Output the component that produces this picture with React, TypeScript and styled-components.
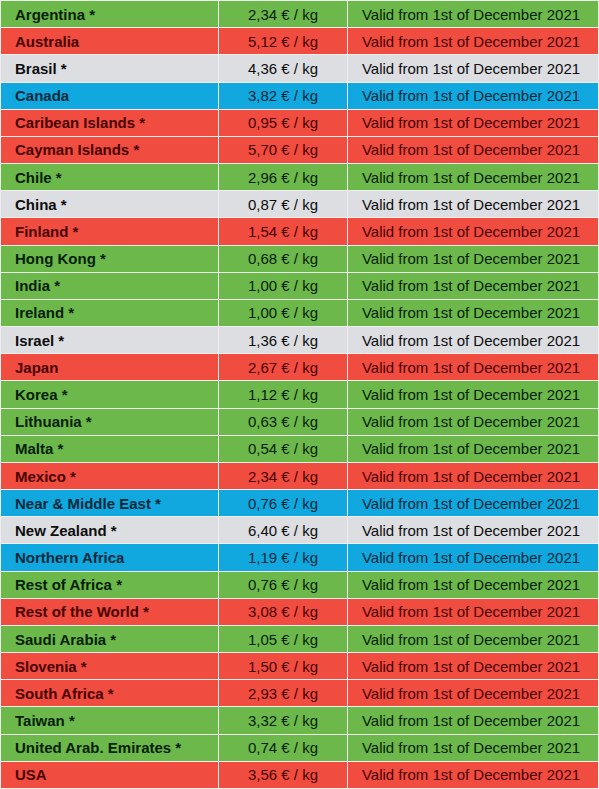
import React from "react";
import styled, { createGlobalStyle } from "styled-components";

type Tone = "green" | "red" | "gray" | "blue";

const palette: Record<Tone, { bg: string; fg: string }> = {
  green: { bg: "#6cb84b", fg: "#061e06" },
  red: { bg: "#f04c40", fg: "#480202" },
  gray: { bg: "#dcdee2", fg: "#0d0d0d" },
  blue: { bg: "#10a8de", fg: "#02283a" },
};

const GlobalStyle = createGlobalStyle`
  html, body { margin: 0; padding: 0; background: #ffffff; }
  body { font-family: "Liberation Sans", Arial, sans-serif; }
`;

const Table = styled.div`
  width: 599px;
  height: 789px;
  box-sizing: border-box;
  padding: 1px;
  background: #eeeeee;
  display: flex;
  flex-direction: column;
  gap: 1px;
`;

const Row = styled.div`
  flex: 1;
  display: grid;
  grid-template-columns: 217px 128px 250px;
  column-gap: 1px;
`;

const Cell = styled.div<{ $tone: Tone; $align: "left" | "center" }>`
  background: ${(p) => palette[p.$tone].bg};
  color: ${(p) => palette[p.$tone].fg};
  display: flex;
  align-items: center;
  justify-content: ${(p) => (p.$align === "left" ? "flex-start" : "center")};
  padding-left: ${(p) => (p.$align === "left" ? "14px" : "0")};
  font-size: 15px;
  white-space: nowrap;
`;

const Country = styled(Cell)`
  font-weight: bold;
`;

const Price = styled(Cell)`
  padding-left: 0;
`;

const Valid = styled(Cell)`
  padding-right: 4px;
`;

const rows: [string, string, Tone][] = [
  ["Argentina *", "2,34", "green"],
  ["Australia", "5,12", "red"],
  ["Brasil *", "4,36", "gray"],
  ["Canada", "3,82", "blue"],
  ["Caribean Islands *", "0,95", "red"],
  ["Cayman Islands *", "5,70", "red"],
  ["Chile *", "2,96", "green"],
  ["China *", "0,87", "gray"],
  ["Finland *", "1,54", "red"],
  ["Hong Kong *", "0,68", "green"],
  ["India *", "1,00", "green"],
  ["Ireland *", "1,00", "green"],
  ["Israel *", "1,36", "gray"],
  ["Japan", "2,67", "red"],
  ["Korea *", "1,12", "green"],
  ["Lithuania *", "0,63", "green"],
  ["Malta *", "0,54", "green"],
  ["Mexico *", "2,34", "red"],
  ["Near & Middle East *", "0,76", "blue"],
  ["New Zealand *", "6,40", "gray"],
  ["Northern Africa", "1,19", "blue"],
  ["Rest of Africa *", "0,76", "green"],
  ["Rest of the World *", "3,08", "red"],
  ["Saudi Arabia *", "1,05", "green"],
  ["Slovenia *", "1,50", "red"],
  ["South Africa *", "2,93", "red"],
  ["Taiwan *", "3,32", "green"],
  ["United Arab. Emirates *", "0,74", "green"],
  ["USA", "3,56", "red"],
];

export default function App() {
  return (
    <>
      <GlobalStyle />
      <Table>
        {rows.map(([name, price, tone]) => (
          <Row key={name}>
            <Country $tone={tone} $align="left">{name}</Country>
            <Price $tone={tone} $align="center">{price} € / kg</Price>
            <Valid $tone={tone} $align="center">Valid from 1st of December 2021</Valid>
          </Row>
        ))}
      </Table>
    </>
  );
}
